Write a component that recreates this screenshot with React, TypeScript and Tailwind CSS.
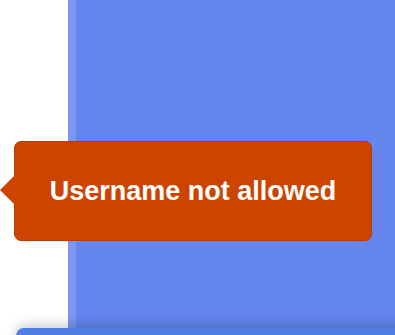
import React from 'react';

export default function App() {
  return (
    <div className="relative h-[335px] w-[395px] overflow-hidden bg-white font-['Liberation_Sans',Arial,sans-serif]">
      <div className="flex h-full">
        <div className="w-[68px] shrink-0 bg-white" />
        <div className="w-[8px] shrink-0 bg-[#7b97f0]" />
        <div className="flex-1 bg-[#6486ee]" />
      </div>

      {/* bottom panel peeking in */}
      <div className="absolute left-[16px] top-[328px] h-[40px] w-[400px] rounded-tl-[8px] bg-[#4f7fe2] shadow-[0_-4px_12px_rgba(0,0,0,0.18)]" />

      {/* error tooltip */}
      <div className="absolute left-[14px] top-[141px] flex h-[100px] w-[358px] items-center justify-center rounded-[7px] border border-[#b83a00] bg-[#cc4400]">
        <div className="absolute left-[-15px] top-[33px] h-0 w-0 border-y-[15px] border-r-[15px] border-y-transparent border-r-[#cc4400]" />
        <span className="text-[27px] font-bold leading-none text-white">Username not allowed</span>
      </div>
    </div>
  );
}
